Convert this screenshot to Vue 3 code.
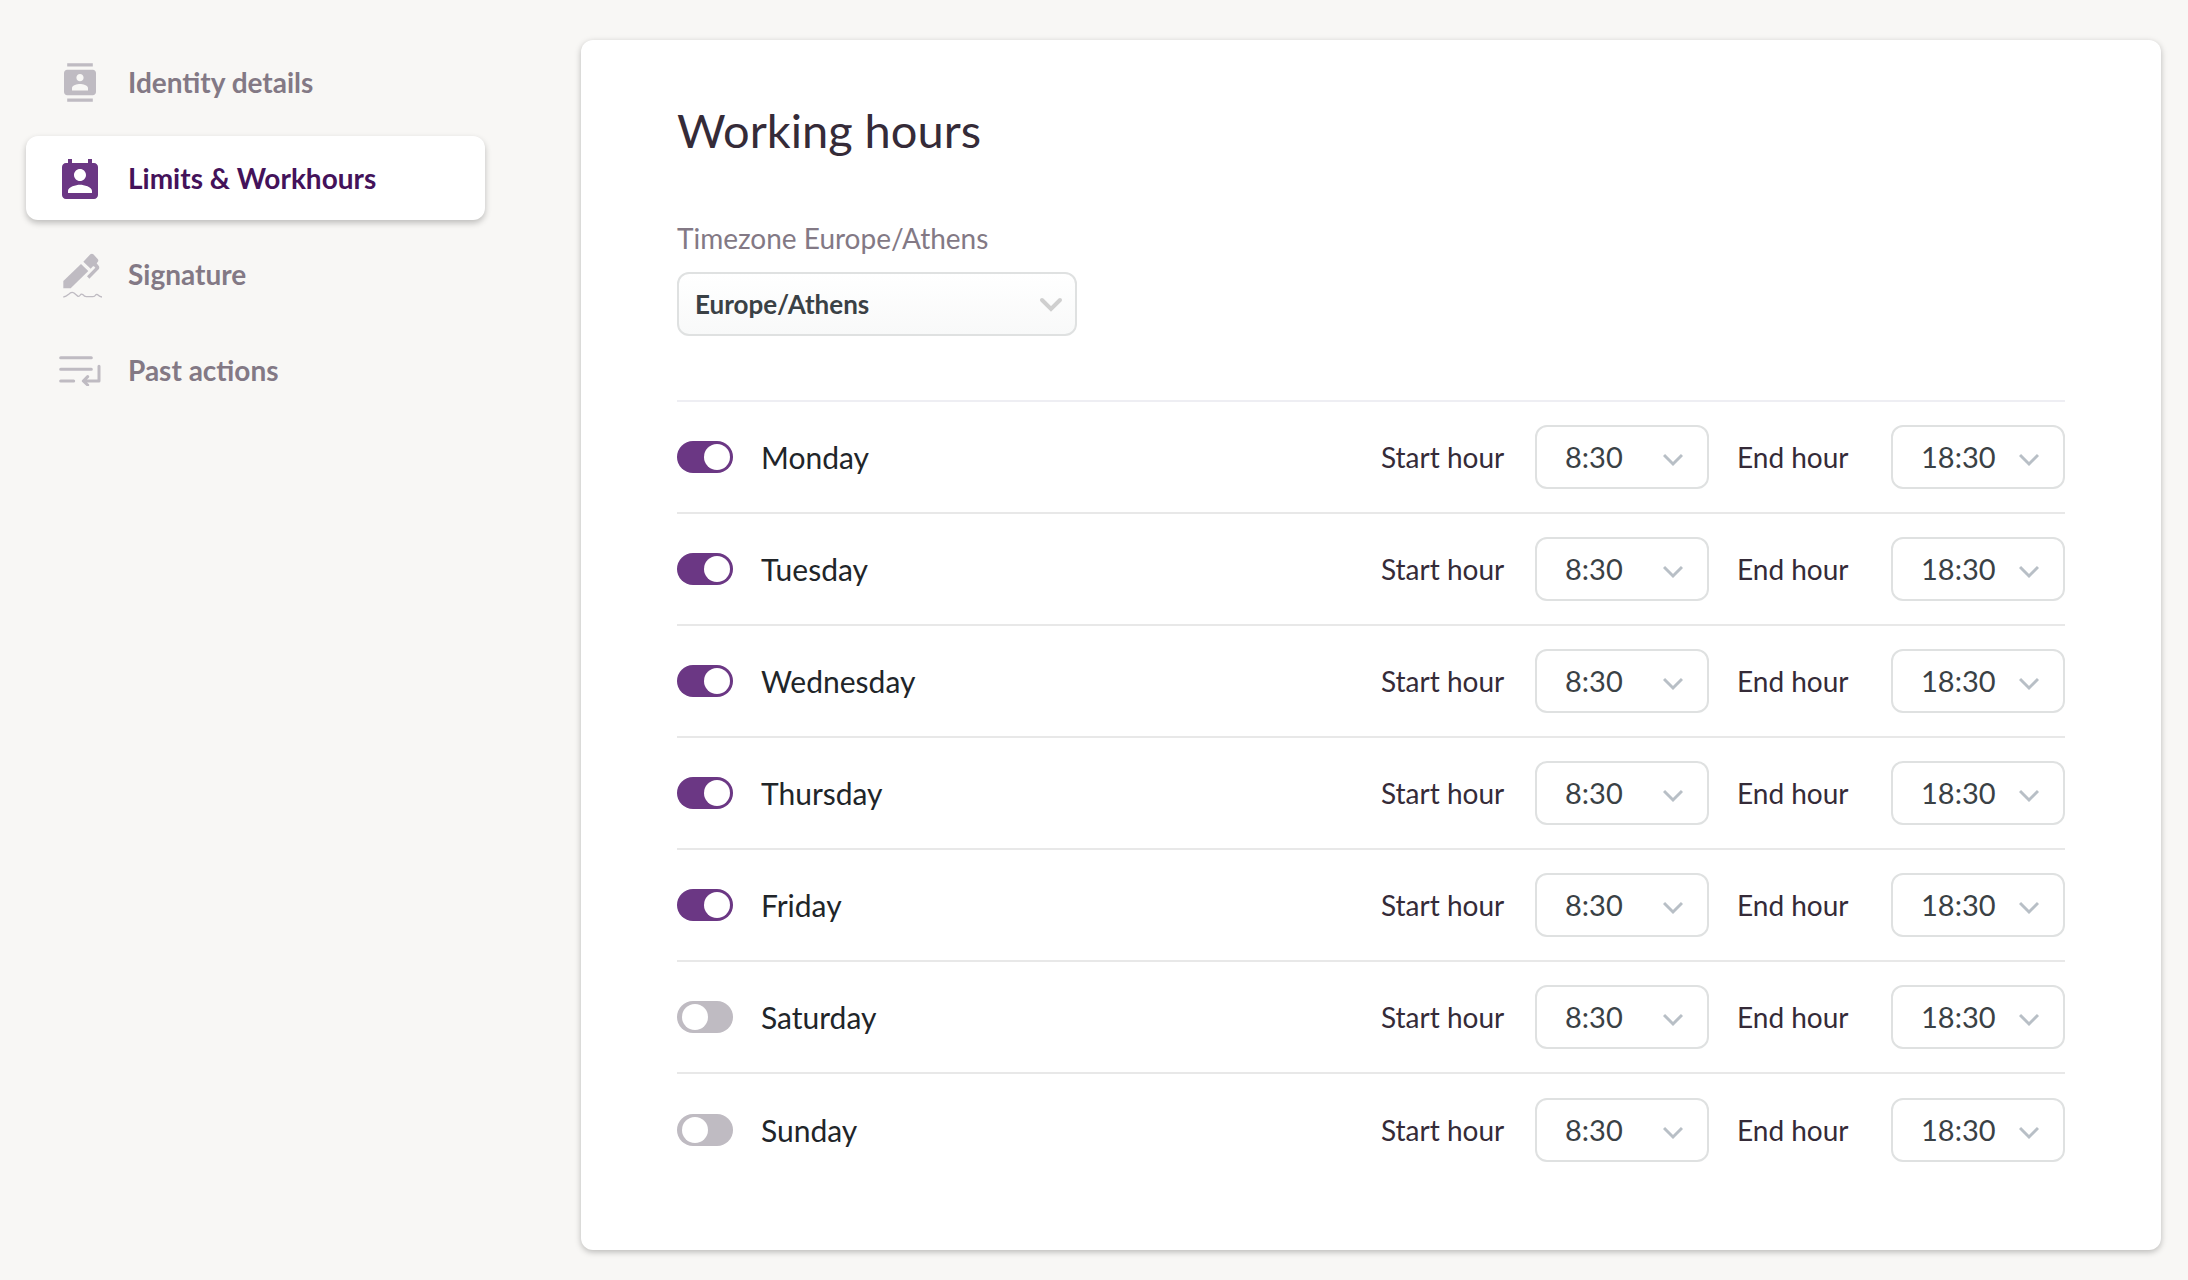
<script setup>
import { ref } from 'vue'

const navItems = [
  { id: 'identity', label: 'Identity details' },
  { id: 'limits', label: 'Limits & Workhours' },
  { id: 'signature', label: 'Signature' },
  { id: 'actions', label: 'Past actions' },
]
const current = ref('limits')

const timezones = ['Europe/Athens', 'Europe/Berlin', 'Europe/London', 'America/New_York']
const timezone = ref('Europe/Athens')

const hours = Array.from({ length: 48 }, (_, i) => `${Math.floor(i / 2)}:${i % 2 ? '30' : '00'}`)

const days = ref(
  ['Monday', 'Tuesday', 'Wednesday', 'Thursday', 'Friday', 'Saturday', 'Sunday'].map((name, i) => ({
    name,
    enabled: i < 5,
    start: '8:30',
    end: '18:30',
  })),
)
</script>

<template>
  <div class="page">
    <nav class="sidebar">
      <a
        v-for="item in navItems"
        :key="item.id"
        href="#"
        class="nav-item"
        :class="{ active: item.id === current }"
        @click.prevent="current = item.id"
      >
        <span class="nav-icon" aria-hidden="true">
          <svg v-if="item.id === 'identity'" width="32" height="39" viewBox="2 0 20 24" fill="currentColor">
            <path d="M20 0H4v2h16V0zM4 24h16v-2H4v2zM20 4H4c-1.1 0-2 .9-2 2v12c0 1.1.9 2 2 2h16c1.1 0 2-.9 2-2V6c0-1.1-.9-2-2-2zm-8 2.75c1.24 0 2.25 1.01 2.25 2.25s-1.01 2.25-2.25 2.25S9.75 10.24 9.75 9 10.76 6.75 12 6.75zM17 17H7v-1.5c0-1.67 3.33-2.5 5-2.5s5 .83 5 2.5V17z" />
          </svg>
          <svg v-else-if="item.id === 'limits'" width="36" height="42" viewBox="3 0 18 21" fill="currentColor">
            <path d="M19 3h-1V1h-2v2H8V1H6v2H5c-1.11 0-2 .9-2 2v14c0 1.1.89 2 2 2h14c1.1 0 2-.9 2-2V5c0-1.1-.9-2-2-2zm-7 3c1.66 0 3 1.34 3 3s-1.34 3-3 3-3-1.34-3-3 1.34-3 3-3zm6 12H6v-1c0-2 4-3.1 6-3.1s6 1.1 6 3.1v1z" />
          </svg>
          <svg v-else-if="item.id === 'signature'" width="44" height="48" viewBox="-15 -10 132 144" fill="currentColor">
            <path d="M1 83 54 32 76 53 23 105H1Z" />
            <path d="M61 25 82 3q5-4 9 0l13 14q4 5 0 9l-3 4 7 9q2 5-1 9L79 76l-7-7 25-26-4-4H90l-7 7Z" />
            <path d="M1 131q8-1 16-8 8-9 16-4l12 10q4 1 7-4 3-5 8-1 4 6 10 6h20q5 0 8-5 3-4 8 1 4 4 11 5" fill="none" stroke="currentColor" stroke-width="4" />
          </svg>
          <svg v-else width="42" height="32" viewBox="0 -6 126 96" fill="none" stroke="currentColor" stroke-width="9" stroke-linecap="round">
            <path d="M5 5H97M5 40H97M5 75H44" />
            <path d="M120 31V75H76M86 62 73 75 86 87" stroke-linejoin="round" />
          </svg>
        </span>
        <span>{{ item.label }}</span>
      </a>
    </nav>

    <main class="card">
      <h1>Working hours</h1>

      <div class="timezone">
        <label for="timezone">Timezone {{ timezone }}</label>
        <div class="select select-wide">
          <select id="timezone" v-model="timezone">
            <option v-for="zone in timezones" :key="zone">{{ zone }}</option>
          </select>
          <svg class="chevron" width="24" height="16" viewBox="0 0 24 16" aria-hidden="true">
            <path d="M3 3 12 12 21 3" stroke-width="4" stroke-linecap="round" />
          </svg>
        </div>
      </div>

      <ul class="days">
        <li v-for="day in days" :key="day.name" class="day">
          <label class="day-toggle">
            <input v-model="day.enabled" type="checkbox" class="toggle" />
            <span>{{ day.name }}</span>
          </label>
          <div class="range">
            <label :for="`${day.name}-start`">Start hour</label>
            <div class="select">
              <select :id="`${day.name}-start`" v-model="day.start">
                <option v-for="hour in hours" :key="hour">{{ hour }}</option>
              </select>
              <svg class="chevron" width="20" height="14" viewBox="0 0 20 14" aria-hidden="true">
                <path d="M1 2 10 11 19 2" stroke-width="3" />
              </svg>
            </div>
            <label :for="`${day.name}-end`">End hour</label>
            <div class="select">
              <select :id="`${day.name}-end`" v-model="day.end">
                <option v-for="hour in hours" :key="hour">{{ hour }}</option>
              </select>
              <svg class="chevron" width="20" height="14" viewBox="0 0 20 14" aria-hidden="true">
                <path d="M1 2 10 11 19 2" stroke-width="3" />
              </svg>
            </div>
          </div>
        </li>
      </ul>
    </main>
  </div>
</template>

<style>
body {
  margin: 0;
  background: #f8f7f5;
}
</style>

<style scoped>
.page {
  display: flex;
  align-items: flex-start;
  gap: 96px;
  padding: 40px 27px 30px 26px;
  color: #352b38;
  font-family: Lato, sans-serif;
  font-size: 28px;
  line-height: 32px;
}

.page * {
  box-sizing: border-box;
}

.sidebar {
  display: flex;
  flex: 0 0 459px;
  flex-direction: column;
  gap: 12px;
}

.nav-item {
  display: flex;
  align-items: center;
  gap: 26px;
  height: 84px;
  padding: 0 32px;
  border-radius: 12px;
  color: #837985;
  font-weight: 700;
  text-decoration: none;
}

.nav-item.active {
  background: #fff;
  box-shadow: 0 3px 6px rgba(0, 0, 0, 0.24);
  color: #44125a;
}

.nav-icon {
  display: flex;
  justify-content: center;
  width: 44px;
  color: #bfbbc2;
}

.nav-item.active .nav-icon {
  color: #6b3784;
}

.card {
  flex: 1;
  padding: 62px 96px 64px;
  border-radius: 12px;
  background: #fff;
  box-shadow: 0 2px 6px rgba(0, 0, 0, 0.26);
}

h1 {
  margin: 0 0 64px;
  font-size: 47px;
  font-weight: 400;
  line-height: 56px;
}

.timezone {
  display: flex;
  flex-direction: column;
  align-items: flex-start;
  gap: 18px;
  margin-bottom: 64px;
}

.timezone label {
  color: #837985;
}

.select {
  position: relative;
  width: 174px;
}

.select select {
  display: block;
  width: 100%;
  height: 64px;
  padding: 0 28px;
  border: 2px solid #dfe1e1;
  border-radius: 12px;
  appearance: none;
  background: #fff;
  color: #3a4145;
  font: inherit;
  font-size: 29px;
}

.select-wide {
  width: 400px;
}

.select-wide select {
  padding: 0 16px;
  background: linear-gradient(#fff, #f8f9f9);
  font-size: 26px;
  font-weight: 700;
}

.chevron {
  position: absolute;
  top: 28px;
  right: 26px;
  fill: none;
  stroke: #b8bfc6;
  pointer-events: none;
}

.select-wide .chevron {
  top: 25px;
  right: 14px;
  stroke: #cfcfcf;
}

.days {
  margin: 0;
  padding: 0;
  border-top: 2px solid #eeeef3;
  list-style: none;
}

.day {
  display: flex;
  align-items: center;
  justify-content: space-between;
  height: 112px;
  border-bottom: 2px solid #e8e8e8;
}

.day:last-child {
  border-bottom: 0;
}

.day-toggle {
  display: flex;
  align-items: center;
  gap: 28px;
  color: #212529;
  font-size: 30px;
}

.toggle {
  display: flex;
  align-items: center;
  width: 56px;
  height: 32px;
  margin: 0;
  padding: 0 3px 0 5px;
  border-radius: 16px;
  appearance: none;
  background: #bfbbc2;
}

.toggle::before {
  width: 26px;
  height: 26px;
  border-radius: 50%;
  background: #fff;
  content: '';
}

.toggle:checked {
  justify-content: flex-end;
  background: #6b3784;
}

.range {
  display: flex;
  align-items: center;
  gap: 28px;
}

.range label {
  width: 126px;
}
</style>
